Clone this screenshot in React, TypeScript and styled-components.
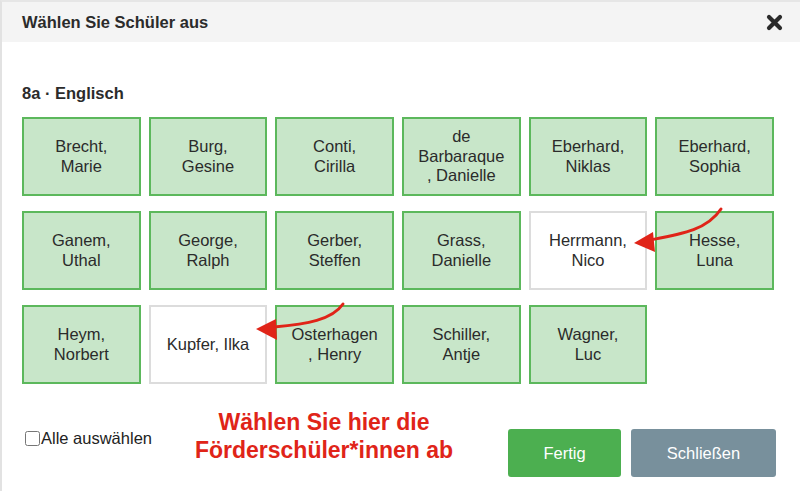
import React from "react";
import styled, { createGlobalStyle } from "styled-components";

const GlobalStyle = createGlobalStyle`
  html, body {
    margin: 0;
    padding: 0;
    background: #ffffff;
  }
  body {
    font-family: "Liberation Sans", Arial, sans-serif;
    color: #333333;
  }
`;

const Dialog = styled.div`
  position: relative;
  width: 800px;
  height: 491px;
  box-sizing: border-box;
  border-left: 2px solid #e2e2e2;
  border-top: 2px solid #e6e6e6;
  background: #ffffff;
  overflow: hidden;
`;

const Header = styled.div`
  display: flex;
  justify-content: space-between;
  align-items: center;
  height: 40px;
  padding: 0 16px 0 20px;
  background: #f4f4f4;
  h1 {
    margin: 0;
    font-size: 16.5px;
    font-weight: bold;
    color: #2b2b2b;
  }
`;

const CloseButton = styled.button`
  display: flex;
  align-items: center;
  justify-content: center;
  width: 20px;
  height: 20px;
  padding: 0;
  border: none;
  background: none;
  cursor: pointer;
`;

const Body = styled.div`
  padding: 42px 26px 0 20px;
`;

const GroupTitle = styled.h2`
  margin: 0 0 14px;
  font-size: 16.5px;
  font-weight: bold;
  line-height: 19px;
  color: #2b2b2b;
`;

const StudentGrid = styled.div`
  display: grid;
  grid-template-columns: repeat(6, 1fr);
  column-gap: 8px;
  row-gap: 15px;
`;

const StudentCell = styled.div<{ $selected: boolean }>`
  display: flex;
  align-items: center;
  justify-content: center;
  height: 79px;
  box-sizing: border-box;
  padding: 0 2px;
  border: 2px solid ${(p) => (p.$selected ? "#5cb85c" : "#dcdcdc")};
  background: ${(p) => (p.$selected ? "#c8e6c9" : "#ffffff")};
  font-size: 16.5px;
  line-height: 19.5px;
  text-align: center;
  color: #2b2b2b;
  cursor: pointer;
`;

const Footer = styled.div`
  display: flex;
  align-items: flex-start;
  margin-top: 24px;
  padding: 0 24px 0 23px;
`;

const CheckLabel = styled.label`
  display: flex;
  align-items: center;
  margin-top: 20px;
  font-size: 16.5px;
  line-height: 20px;
  color: #222222;
  input {
    width: 15px;
    height: 15px;
    margin: 0 1px 0 0;
  }
`;

const Hint = styled.div`
  flex: 1;
  padding-right: 12px;
  text-align: center;
  font-size: 23px;
  font-weight: bold;
  line-height: 28px;
  color: #e02418;
`;

const Buttons = styled.div`
  display: flex;
  gap: 10px;
  margin-top: 21px;
`;

const ActionButton = styled.button<{ $variant: "primary" | "secondary" }>`
  height: 48px;
  width: ${(p) => (p.$variant === "primary" ? "113px" : "145px")};
  border: none;
  border-radius: 3px;
  background: ${(p) => (p.$variant === "primary" ? "#4caf50" : "#78909c")};
  color: #ffffff;
  font-family: "Liberation Sans", Arial, sans-serif;
  font-size: 16.5px;
  cursor: pointer;
`;

const ArrowLayer = styled.svg`
  position: absolute;
  left: 0;
  top: 0;
  pointer-events: none;
`;

const students: { name: string; selected: boolean }[] = [
  { name: "Brecht,\nMarie", selected: true },
  { name: "Burg,\nGesine", selected: true },
  { name: "Conti,\nCirilla", selected: true },
  { name: "de\nBarbaraque\n, Danielle", selected: true },
  { name: "Eberhard,\nNiklas", selected: true },
  { name: "Eberhard,\nSophia", selected: true },
  { name: "Ganem,\nUthal", selected: true },
  { name: "George,\nRalph", selected: true },
  { name: "Gerber,\nSteffen", selected: true },
  { name: "Grass,\nDanielle", selected: true },
  { name: "Herrmann,\nNico", selected: false },
  { name: "Hesse,\nLuna", selected: true },
  { name: "Heym,\nNorbert", selected: true },
  { name: "Kupfer, Ilka", selected: false },
  { name: "Osterhagen\n, Henry", selected: true },
  { name: "Schiller,\nAntje", selected: true },
  { name: "Wagner,\nLuc", selected: true },
];

const renderName = (name: string) =>
  name.split("\n").map((line, i) => (
    <React.Fragment key={i}>
      {i > 0 && <br />}
      {line}
    </React.Fragment>
  ));

const App = () => {
  return (
    <>
      <GlobalStyle />
      <Dialog>
        <Header>
          <h1>Wählen Sie Schüler aus</h1>
          <CloseButton aria-label="Schließen">
            <svg width="17" height="17" viewBox="0 0 17 17">
              <path
                d="M3 3 L14 14 M14 3 L3 14"
                stroke="#2b2b2b"
                strokeWidth="4.2"
                strokeLinecap="round"
              />
            </svg>
          </CloseButton>
        </Header>
        <Body>
          <GroupTitle>8a · Englisch</GroupTitle>
          <StudentGrid>
            {students.map((s) => (
              <StudentCell key={s.name} $selected={s.selected}>
                <span>{renderName(s.name)}</span>
              </StudentCell>
            ))}
          </StudentGrid>
        </Body>
        <Footer>
          <CheckLabel>
            <input type="checkbox" />
            Alle auswählen
          </CheckLabel>
          <Hint>
            Wählen Sie hier die
            <br />
            Förderschüler*innen ab
          </Hint>
          <Buttons>
            <ActionButton $variant="primary">Fertig</ActionButton>
            <ActionButton $variant="secondary">Schließen</ActionButton>
          </Buttons>
        </Footer>
        <ArrowLayer width="800" height="491" viewBox="0 0 800 491">
          <path
            d="M719 207 C 705 228, 680 232, 648 238"
            fill="none"
            stroke="#e02418"
            strokeWidth="3"
            strokeLinecap="round"
          />
          <path d="M632 241 L651 230 L653 250 Z" fill="#e02418" />
          <path
            d="M341 302 C 330 318, 305 322, 272 325"
            fill="none"
            stroke="#e02418"
            strokeWidth="3"
            strokeLinecap="round"
          />
          <path d="M254 327 L274 317 L275 338 Z" fill="#e02418" />
        </ArrowLayer>
      </Dialog>
    </>
  );
};

export default App;
